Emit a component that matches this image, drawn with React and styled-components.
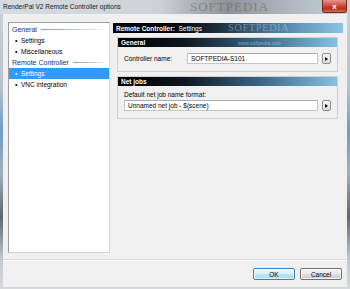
import React from "react";
import styled, { createGlobalStyle } from "styled-components";

const GlobalStyle = createGlobalStyle`
  html, body {
    margin: 0;
    padding: 0;
    width: 350px;
    height: 289px;
    overflow: hidden;
    background: #d4d9de;
  }
  * {
    box-sizing: border-box;
  }
`;

const tree = [
  { type: "heading", label: "General" },
  { type: "item", label: "Settings" },
  { type: "item", label: "Miscellaneous" },
  { type: "heading", label: "Remote Controller" },
  { type: "item", label: "Settings", selected: true },
  { type: "item", label: "VNC integration" },
];

const App = () => {
  return (
    <>
      <GlobalStyle />
      <Window>
        <TitleBar>
          <Title>RenderPal V2 Remote Controller options</Title>
          <CloseButton>x</CloseButton>
        </TitleBar>
        <Client>
          <Main>
            <TreePanel>
              {tree.map((node, i) =>
                node.type === "heading" ? (
                  <TreeHeading key={i}>
                    <span>{node.label}</span>
                    <HeadingLine />
                  </TreeHeading>
                ) : (
                  <TreeItem key={i} selected={node.selected}>
                    <Bullet>•</Bullet>
                    {node.label}
                  </TreeItem>
                )
              )}
            </TreePanel>
            <Content>
              <PageHeader>
                <b>Remote Controller:</b>&nbsp; Settings
              </PageHeader>
              <Group>
                <GroupHeader>General</GroupHeader>
                <InlineRow>
                  <Label>Controller name:</Label>
                  <Input>SOFTPEDIA-S101</Input>
                  <ArrowButton>
                    <Arrow />
                  </ArrowButton>
                </InlineRow>
              </Group>
              <Group>
                <GroupHeader>Net jobs</GroupHeader>
                <StackRow>
                  <Label>Default net job name format:</Label>
                  <FieldRow>
                    <Input>Unnamed net job - $(scene)</Input>
                    <ArrowButton>
                      <Arrow />
                    </ArrowButton>
                  </FieldRow>
                </StackRow>
              </Group>
            </Content>
          </Main>
          <Footer>
            <Button primary>OK</Button>
            <Button>Cancel</Button>
          </Footer>
        </Client>
        <WatermarkBig>SOFTPEDIA</WatermarkBig>
        <WatermarkSmall>SOFTPEDIA</WatermarkSmall>
        <WatermarkUrl>www.softpedia.com</WatermarkUrl>
      </Window>
    </>
  );
};

export default App;

const Window = styled.div`
  position: relative;
  width: 350px;
  height: 289px;
  display: flex;
  flex-direction: column;
  padding: 0 3px 2px 3px;
  background: linear-gradient(
    180deg,
    #cdd3d8 0%,
    #b8c3cc 30%,
    #6f9cc2 45%,
    #9fb0be 60%,
    #5c6670 75%,
    #c3cad0 90%,
    #d6dadd 100%
  );
  font-family: "Liberation Sans", Arial, sans-serif;
  font-size: 6.5px;
  color: #000;
  overflow: hidden;
`;

const TitleBar = styled.div`
  height: 14px;
  margin: 0 -3px;
  padding: 0 3px;
  display: flex;
  align-items: flex-start;
  justify-content: space-between;
  background: linear-gradient(90deg, #d6dbdf 0%, #cdd3d8 45%, #8d9297 65%, #b4bcc3 85%, #c9d0d6 100%);
`;

const Title = styled.div`
  padding-top: 3px;
  font-size: 6.5px;
  color: #1a1a1a;
  white-space: nowrap;
`;

const CloseButton = styled.div`
  width: 25px;
  height: 13px;
  display: flex;
  align-items: center;
  justify-content: center;
  color: #fff;
  font-weight: bold;
  font-size: 8px;
  border: 1px solid #7a2a22;
  border-top: none;
  border-radius: 0 0 3px 3px;
  background: linear-gradient(180deg, #e4978c 0%, #c9493a 50%, #b8301f 70%, #d6694f 100%);
`;

const Client = styled.div`
  flex: 1;
  display: flex;
  flex-direction: column;
  background: #f0f0f0;
`;

const Main = styled.div`
  display: flex;
  gap: 3px;
  padding: 8px 4px 0 5px;
`;

const TreePanel = styled.div`
  width: 102px;
  height: 231px;
  padding: 1px 0;
  background: #fff;
  border: 1px solid #a9a9a9;
  border-color: #9e9e9e #d4d4d4 #d4d4d4 #9e9e9e;
`;

const TreeHeading = styled.div`
  height: 11px;
  display: flex;
  align-items: center;
  gap: 4px;
  padding-left: 3px;
  padding-right: 4px;
  color: #1c2f78;
  font-size: 7px;
  white-space: nowrap;
`;

const HeadingLine = styled.div`
  flex: 1;
  height: 1px;
  background: linear-gradient(90deg, #8295c4, rgba(130, 149, 196, 0.1));
`;

const TreeItem = styled.div`
  height: 11px;
  display: flex;
  align-items: center;
  padding-left: 6px;
  white-space: nowrap;
  background: ${(props) => (props.selected ? "#3399ff" : "transparent")};
  color: ${(props) => (props.selected ? "#fff" : "#000")};
`;

const Bullet = styled.span`
  width: 6px;
  font-size: 7px;
`;

const Content = styled.div`
  flex: 1;
  display: flex;
  flex-direction: column;
  gap: 3px;
  padding-top: 1px;
`;

const PageHeader = styled.div`
  height: 10px;
  display: flex;
  align-items: center;
  padding-left: 3px;
  color: #fff;
  font-size: 6.5px;
  white-space: nowrap;
  background: linear-gradient(90deg, #000 0%, #000 25%, #1c2d3c 45%, #4a7a9e 70%, #8ec5e6 100%);
`;

const Group = styled.div`
  margin: 1px 5px 0 4px;
  border: 1px solid #d0d0d0;
  background: #f0f0f0;
`;

const GroupHeader = styled.div`
  height: 9px;
  display: flex;
  align-items: center;
  padding-left: 3px;
  color: #fff;
  font-weight: bold;
  font-size: 6.5px;
  background: linear-gradient(90deg, #000 0%, #0d1720 30%, #3b6686 65%, #86c1e3 100%);
`;

const InlineRow = styled.div`
  display: flex;
  align-items: center;
  padding: 6px 6px 7px 6px;
`;

const StackRow = styled.div`
  display: flex;
  flex-direction: column;
  gap: 2px;
  padding: 5px 6px 7px 6px;
`;

const FieldRow = styled.div`
  display: flex;
  align-items: center;
`;

const Label = styled.div`
  min-width: 63px;
  white-space: nowrap;
`;

const Input = styled.div`
  flex: 1;
  height: 11px;
  display: flex;
  align-items: center;
  padding-left: 3px;
  background: #fff;
  border: 1px solid #c6c6c6;
  border-top-color: #abadb3;
  white-space: nowrap;
`;

const ArrowButton = styled.div`
  width: 9px;
  height: 11px;
  margin-left: 4px;
  display: flex;
  align-items: center;
  justify-content: center;
  border: 1px solid #8c8c8c;
  border-radius: 2px;
  background: linear-gradient(180deg, #f6f6f6, #dcdcdc);
`;

const Arrow = styled.div`
  width: 0;
  height: 0;
  border-top: 2.5px solid transparent;
  border-bottom: 2.5px solid transparent;
  border-left: 3px solid #000;
`;

const Footer = styled.div`
  margin-top: 6px;
  padding: 8px 5px 0 0;
  display: flex;
  justify-content: flex-end;
  gap: 5px;
  border-top: 1px solid #d5d5d5;
  box-shadow: inset 0 1px 0 #fff;
`;

const Button = styled.div`
  width: 42px;
  height: 12px;
  display: flex;
  align-items: center;
  justify-content: center;
  font-size: 6.5px;
  border-radius: 2px;
  border: 1px solid ${(props) => (props.primary ? "#3c7fb1" : "#707070")};
  background: ${(props) =>
    props.primary
      ? "linear-gradient(180deg, #eaf6fd 0%, #d9f0fc 50%, #bee6fd 51%, #a7d9f5 100%)"
      : "linear-gradient(180deg, #f2f2f2 0%, #ebebeb 50%, #dddddd 51%, #cfcfcf 100%)"};
  box-shadow: inset 0 0 0 1px rgba(255, 255, 255, 0.7);
`;

const WatermarkBig = styled.div`
  position: absolute;
  top: 0;
  left: 190px;
  line-height: 13px;
  font-family: "Liberation Serif", serif;
  font-size: 13px;
  letter-spacing: 1px;
  color: rgba(60, 60, 60, 0.35);
  pointer-events: none;
`;

const WatermarkSmall = styled.div`
  position: absolute;
  top: 22px;
  left: 228px;
  font-family: "Liberation Serif", serif;
  font-size: 10.5px;
  letter-spacing: 0.5px;
  color: rgba(200, 215, 225, 0.45);
  pointer-events: none;
`;

const WatermarkUrl = styled.div`
  position: absolute;
  top: 40px;
  left: 238px;
  font-size: 5px;
  color: rgba(200, 215, 225, 0.6);
  pointer-events: none;
`;
